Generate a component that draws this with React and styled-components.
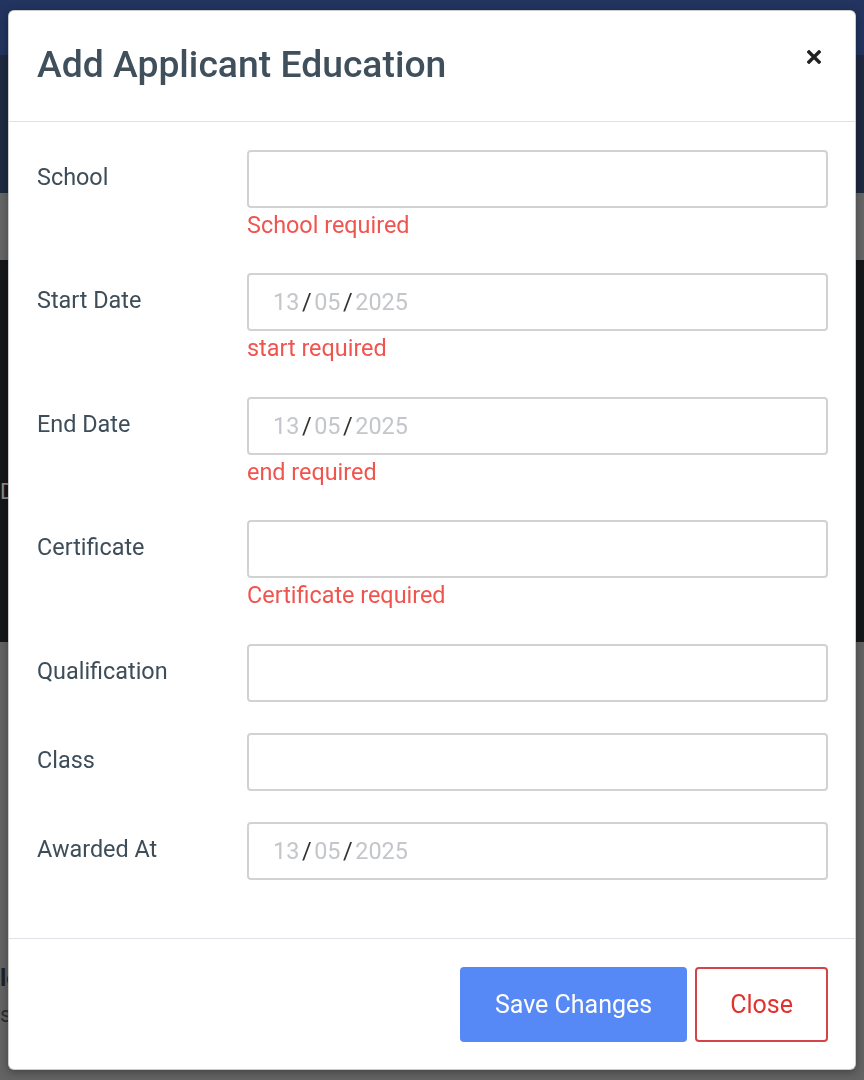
import styled, { createGlobalStyle } from "styled-components";

const GlobalStyle = createGlobalStyle`
  html, body {
    margin: 0;
    padding: 0;
    height: 100%;
    overflow: hidden;
    font-family: Roboto, "Liberation Sans", sans-serif;
  }
  * {
    box-sizing: border-box;
  }
`;

const fields = [
  { label: "School", error: "School required" },
  { label: "Start Date", date: true, error: "start required" },
  { label: "End Date", date: true, error: "end required" },
  { label: "Certificate", error: "Certificate required" },
  { label: "Qualification" },
  { label: "Class" },
  { label: "Awarded At", date: true },
];

export default function App() {
  return (
    <>
      <GlobalStyle />
      <PageBehind>
        <TopBar />
        <HeroBand />
        <StripBand />
        <DarkBand>
          <BandText>Dashboard</BandText>
        </DarkBand>
        <LowerBand>
          <HiddenHeading>lead</HiddenHeading>
          <HiddenLine>sessions</HiddenLine>
        </LowerBand>
      </PageBehind>

      <Overlay>
        <Dialog>
          <Header>
            <Title>Add Applicant Education</Title>
            <CloseIcon aria-label="close">
              <svg width="14" height="14" viewBox="0 0 14 14">
                <path
                  d="M2 2 L12 12 M12 2 L2 12"
                  stroke="#222"
                  strokeWidth="3.4"
                  strokeLinecap="square"
                />
              </svg>
            </CloseIcon>
          </Header>

          <Body>
            {fields.map((f) => (
              <Row key={f.label}>
                <Label>{f.label}</Label>
                <Control>
                  {f.date ? (
                    <DateField>
                      <Faint>13</Faint>
                      <Slash>/</Slash>
                      <Faint>05</Faint>
                      <Slash>/</Slash>
                      <Faint>2025</Faint>
                    </DateField>
                  ) : (
                    <TextInput type="text" />
                  )}
                  {f.error && <ErrorText>{f.error}</ErrorText>}
                </Control>
              </Row>
            ))}
          </Body>

          <Footer>
            <SaveButton>Save Changes</SaveButton>
            <CloseButton>Close</CloseButton>
          </Footer>
        </Dialog>
      </Overlay>
    </>
  );
}

const PageBehind = styled.div`
  display: flex;
  flex-direction: column;
  width: 100%;
  height: 1080px;
  background: #636363;
`;

const TopBar = styled.div`
  height: 55px;
  background: #22345f;
`;

const HeroBand = styled.div`
  height: 138px;
  background: #1f2940;
`;

const StripBand = styled.div`
  height: 67px;
  background: #666666;
`;

const DarkBand = styled.div`
  height: 382px;
  background: #161718;
  display: flex;
  align-items: center;
  padding-top: 80px;
`;

const BandText = styled.span`
  color: #8a8a8a;
  font-size: 22px;
`;

const LowerBand = styled.div`
  flex: 1;
  display: flex;
  flex-direction: column;
  padding-top: 322px;
  gap: 10px;
`;

const HiddenHeading = styled.span`
  color: #1f2326;
  font-size: 24px;
  font-weight: 700;
`;

const HiddenLine = styled.span`
  color: #2a2f33;
  font-size: 22px;
`;

const Overlay = styled.div`
  position: fixed;
  inset: 0;
  display: flex;
  justify-content: center;
  align-items: flex-start;
  padding: 10px 8px;
`;

const Dialog = styled.div`
  width: 848px;
  background: #fff;
  border: 1px solid rgba(0, 0, 0, 0.2);
  border-radius: 6px;
  box-shadow: 0 2px 8px rgba(0, 0, 0, 0.35);
  display: flex;
  flex-direction: column;
`;

const Header = styled.div`
  display: flex;
  align-items: center;
  justify-content: space-between;
  height: 111px;
  padding: 0 34px 4px 28px;
  border-bottom: 1px solid #dee2e6;
`;

const Title = styled.h4`
  margin: 0;
  font-size: 37.3px;
  font-weight: 500;
  color: #3f505c;
  line-height: 1.2;
`;

const CloseIcon = styled.span`
  display: flex;
  align-self: flex-start;
  margin-top: 39px;
`;

const Body = styled.div`
  padding: 28px 27px 26px 28px;
  display: flex;
  flex-direction: column;
`;

const Row = styled.div`
  display: grid;
  grid-template-columns: 210px 1fr;
  margin-bottom: 31.4px;
`;

const Label = styled.label`
  font-size: 23.4px;
  line-height: 34px;
  padding-top: 10px;
  color: #3d4d59;
`;

const Control = styled.div`
  display: flex;
  flex-direction: column;
`;

const TextInput = styled.input`
  height: 58px;
  width: 100%;
  border: 2px solid #d2d2d2;
  border-radius: 4px;
  padding: 0 24px;
  font-family: Roboto, "Liberation Sans", sans-serif;
  font-size: 23.4px;
  color: #333;
  outline: none;
`;

const DateField = styled.div`
  height: 58px;
  border: 2px solid #d2d2d2;
  border-radius: 4px;
  padding: 0 24px;
  display: flex;
  align-items: center;
  font-size: 23.4px;
  color: #333;
`;

const Faint = styled.span`
  color: #c3c6ca;
`;

const Slash = styled.span`
  color: #333;
  margin: 0 2.6px;
`;

const ErrorText = styled.div`
  color: #f0544e;
  font-size: 23.4px;
  line-height: 34px;
`;

const Footer = styled.div`
  display: flex;
  justify-content: flex-end;
  gap: 8px;
  padding: 28px 27px 27px;
  border-top: 1px solid #dee2e6;
`;

const SaveButton = styled.button`
  height: 75px;
  padding: 0 35px;
  border: none;
  border-radius: 4px;
  background: #5789f6;
  color: #fff;
  font-family: Roboto, "Liberation Sans", sans-serif;
  font-size: 25px;
`;

const CloseButton = styled.button`
  height: 75px;
  padding: 0 33px;
  border: 2px solid #d2444a;
  border-radius: 4px;
  background: #fff;
  color: #e2322f;
  font-family: Roboto, "Liberation Sans", sans-serif;
  font-size: 25px;
`;
